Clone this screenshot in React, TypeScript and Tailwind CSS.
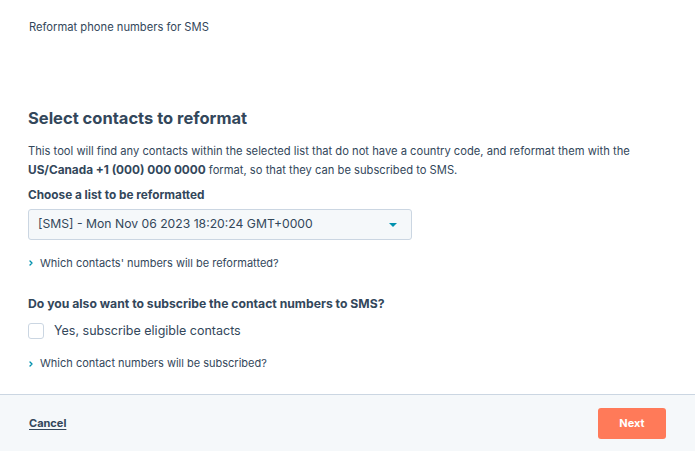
import { ChevronRight } from 'lucide-react';

function Disclosure({ label }: { label: string }) {
    return (
        <button className="flex items-center gap-[5px] text-[11px] text-[#33475b]">
            <ChevronRight className="w-[8px] h-[8px] text-[#0091ae] -ml-px" strokeWidth={4} />
            {label}
        </button>
    );
}

export default function App() {
    return (
        <div className="w-[695px] h-[451px] flex flex-col bg-white text-[#33475b] font-['Inter',sans-serif]">
            <div className="flex-1 px-[28px]">
                <p className="pt-[19px] text-[11.2px] leading-[16px] pl-px">Reformat phone numbers for SMS</p>

                <h2 className="mt-[71px] text-[16.5px] leading-[24px] font-bold">Select contacts to reformat</h2>

                <p className="mt-[12px] text-[11.2px] leading-[19px]">
                    This tool will find any contacts within the selected list that do not have a country code, and reformat them with the{' '}
                    <strong className="text-[11.8px]">US/Canada +1 (000) 000 0000</strong> format, so that they can be subscribed to SMS.
                </p>

                <p className="mt-[7px] text-[11.8px] leading-[16px] font-bold">Choose a list to be reformatted</p>

                <div className="mt-[6px] w-[384px] h-[31px] flex items-center justify-between px-[9px] bg-[#f5f8fa] border border-[#cbd6e2] rounded-[3px]">
                    <span className="text-[12.2px]">[SMS] - Mon Nov 06 2023 18:20:24 GMT+0000</span>
                    <span className="mr-[5px] w-0 h-0 border-l-[4px] border-r-[4px] border-t-[4px] border-l-transparent border-r-transparent border-t-[#0091ae]" />
                </div>

                <div className="mt-[15px]">
                    <Disclosure label="Which contacts' numbers will be reformatted?" />
                </div>

                <p className="mt-[24px] text-[12.2px] leading-[16px] font-bold">Do you also want to subscribe the contact numbers to SMS?</p>

                <label className="mt-[10px] flex items-center gap-[10px]">
                    <span className="w-[16px] h-[16px] bg-white border border-[#cbd6e2] rounded-[3px]" />
                    <span className="text-[12.5px]">Yes, subscribe eligible contacts</span>
                </label>

                <div className="mt-[15px]">
                    <Disclosure label="Which contact numbers will be subscribed?" />
                </div>
            </div>

            <div className="h-[57px] flex items-center justify-between pl-[29px] pr-[29px] bg-[#f5f8fa] border-t border-[#cbd6e2]">
                <a href="#" className="text-[11px] font-bold underline underline-offset-2">Cancel</a>
                <button className="w-[68px] h-[31px] rounded-[3px] bg-[#ff7a59] text-white text-[11px] font-bold">Next</button>
            </div>
        </div>
    );
}
